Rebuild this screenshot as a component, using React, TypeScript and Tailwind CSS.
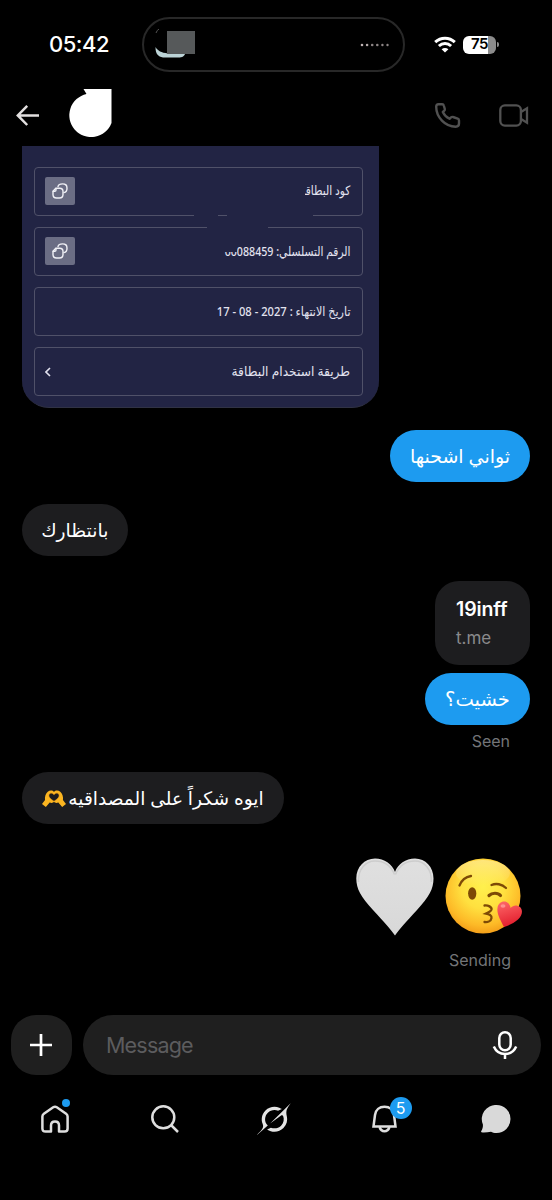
import type { ReactNode } from "react";

function StatusBar() {
  return (
    <div className="flex h-[89px] items-start pt-[17px]">
      <div className="flex h-[55px] w-[142px] items-center pl-[49px] font-['Inter'] text-[22px] font-medium tracking-[-0.5px] text-white">
        05:42
      </div>
      <div className="flex h-[55px] w-[263px] items-center justify-between rounded-full border-2 border-[#282828] pl-[11px] pr-[13px]">
        <svg width="44" height="32" viewBox="0 0 44 32">
          <path d="M.5 18C3 22 6 23.5 13 24.5L30 25C29 28 26 28.5 22 28.5H8C3 27.5 .5 25 .5 18Z" fill="#bcd3d6" />
          <path d="M1 4Q2 1 4 0" stroke="#555" strokeWidth="1" fill="none" />
          <rect x="12" y="2" width="28" height="23" fill="#56595a" />
        </svg>
        <svg width="30" height="4" viewBox="0 0 30 4" fill="#8d8585">
          <circle cx="2" cy="2" r="1.3" fill="#c0b4b4" />
          <circle cx="7.1" cy="2" r="1.3" fill="#b5aaaa" />
          <circle cx="12.2" cy="2" r="1.3" />
          <circle cx="17.3" cy="2" r="1.3" />
          <circle cx="22.4" cy="2" r="1.2" />
          <circle cx="27.5" cy="2" r="1.2" />
        </svg>
      </div>
      <div className="flex h-[55px] items-center pl-[29px]">
        <svg width="22" height="17" viewBox="0 0 22 17" fill="none" stroke="#fff" strokeWidth="3">
          <path d="M1.2 6.2C6.8.9 15.2.9 20.8 6.2" />
          <path d="M4.9 10C8.4 6.8 13.6 6.8 17.1 10" />
          <path d="M11 16.6L7.6 13.2C9.5 11.5 12.5 11.5 14.4 13.2Z" fill="#fff" stroke="none" />
        </svg>
        <div className="ml-[7px] flex h-[18px] w-[33px] items-center justify-center rounded-[6px] bg-linear-to-r from-white from-75% to-[#8c8c8c] to-75% font-['Inter'] text-[15px] font-semibold tracking-[-0.5px] text-black">
          75
        </div>
        <div className="ml-[1px] h-[5px] w-[2px] rounded-r-full bg-[#8c8c8c]" />
      </div>
    </div>
  );
}

function ChatHeader() {
  return (
    <header className="flex h-[56.5px] items-start">
      <svg className="ml-[16px] mt-[15px]" width="24" height="22" viewBox="0 0 24 22" fill="none" stroke="#e2dfdf" strokeWidth="2.5">
        <path d="M23 11.4H2M11.2 1.8L1.8 11.4L11.2 21" />
      </svg>
      <svg className="ml-[28px]" width="45" height="50" viewBox="0 0 45 50" fill="#fff">
        <path d="M15.5 0H43.5V34A21.8 21.8 0 1 1 18.5 5Z" />
      </svg>
      <svg className="ml-[321px] mt-[13px]" width="27" height="26" viewBox="0 0 27 26" fill="none" stroke="#515151" strokeWidth="2.4" strokeLinejoin="round">
        <path d="M4.5 2.2H8.1C9 2.2 9.6 2.7 9.8 3.5L10.8 7C11 7.8 10.7 8.5 10 9L8.8 10C10.2 13 12.6 15.3 15.5 16.8L17 15.4C17.6 14.9 18.3 14.7 19 15L23.7 16.7C24.5 17 25 17.6 25 18.4V21.6C25 24 23.5 24.7 21.7 24.7C11 24.5 2.2 15.2 2.2 4.8C2.2 3.1 3.1 2.2 4.5 2.2Z" />
      </svg>
      <svg className="ml-[38px] mt-[15px]" width="30" height="23" viewBox="0 0 30 23" fill="none" stroke="#515151" strokeWidth="2.3">
        <rect x="1.3" y="1.4" width="20.6" height="20.2" rx="4.5" />
        <path d="M22 8L28 4.3V18.7L22 15" />
      </svg>
    </header>
  );
}

function CopyButton() {
  return (
    <button className="flex h-[28px] w-[30px] items-center justify-center rounded-[2px] bg-[#6b6d84]" aria-label="Copy">
      <svg width="16" height="16" viewBox="0 0 16 16" fill="none" stroke="#f0f0f6" strokeWidth="1.4" strokeLinecap="round">
        <path d="M6 3.5C6.5 1.5 8 .9 10.5.9C13.8.9 15 2 15 5.2C15 8 14.2 9.3 12 9.6" />
        <path d="M3.8 5.3H7.8C10 5.3 11 6.3 11 8.5V11.5C11 14 10 15 7.5 15H4.5C2 15 1 14 1 11.5V8.2Z" />
        <path d="M1.2 8.3H2.7Q4 8.3 4 7V5.4" />
      </svg>
    </button>
  );
}

function CardRow({ children, left }: { children: ReactNode; left?: ReactNode }) {
  return (
    <div className="relative flex h-[49px] items-center justify-between rounded-[4px] border border-[#505169] pl-[10px] pr-[11px] text-[13px] text-[#e2e2ef]">
      <div>{left}</div>
      {children}
    </div>
  );
}

function GiftCard() {
  return (
    <div className="ml-[22px] flex h-[262.5px] w-[356.5px] flex-col gap-[11.3px] rounded-b-[27px] border-b border-[#303244] bg-[#222444] pl-[11.5px] pr-[16px] pt-[21px] font-['Noto_Sans','DejaVu_Sans',sans-serif]">
      <CardRow left={<CopyButton />}>
        <span dir="rtl" className="origin-right scale-x-[0.82] whitespace-nowrap font-medium">كود البطاقة</span>
        <div className="absolute right-[57px] top-[14px] h-[20px] w-[6px] bg-[#222444]" />
        <div className="absolute -bottom-[1px] left-[159px] h-[2px] w-[24px] bg-[#222444]" />
        <div className="absolute -bottom-[1px] left-[192px] h-[2px] w-[86px] bg-[#222444]" />
      </CardRow>
      <CardRow left={<CopyButton />}>
        <span dir="rtl" className="origin-right scale-x-[0.82] whitespace-nowrap font-medium">
          الرقم التسلسلي: <bdi dir="ltr">00088459</bdi>
        </span>
        <div className="absolute right-[125px] top-[14px] h-[10px] w-[14px] bg-[#222444]" />
        <div className="absolute -top-[1px] left-[172px] h-[2px] w-[61px] bg-[#222444]" />
      </CardRow>
      <CardRow>
        <span dir="rtl" className="origin-right scale-x-[0.86] whitespace-nowrap font-medium">
          تاريخ الانتهاء : <bdi dir="ltr">17 - 08 - 2027</bdi>
        </span>
      </CardRow>
      <CardRow
        left={
          <svg width="6" height="10" viewBox="0 0 6 10" fill="none" stroke="#e2e2ef" strokeWidth="1.6">
            <path d="M5 1L1 5L5 9" />
          </svg>
        }
      >
        <span dir="rtl" className="origin-right scale-x-[0.94] whitespace-nowrap">طريقة استخدام البطاقة</span>
      </CardRow>
    </div>
  );
}

function HandsHeart() {
  return (
    <svg width="24" height="17" viewBox="0 0 25 17" preserveAspectRatio="none">
      <path d="M0 14L3.2 10C2.5 7 4 3.5 6 1.8C8 .2 11 .2 12.5 2C14 .2 17 .2 19 1.8C21 3.5 22.5 7 21.8 10L25 14L21 17L17 12.5C14.5 13.5 13.5 12.5 12.5 12C11.5 12.5 10.5 13.5 8 12.5L4 17Z" fill="#fbb521" />
      <path d="M12.5 11.2C9 9 6.8 7.2 7.3 5C7.9 2.7 11 2.7 12.5 4.8C14 2.7 17.1 2.7 17.7 5C18.2 7.2 16 9 12.5 11.2Z" fill="#1d1d1f" stroke="#d98a12" strokeWidth=".5" />
    </svg>
  );
}

function WhiteHeart() {
  return (
    <svg width="78" height="78" viewBox="0 0 78 78">
      <defs>
        <linearGradient id="wh" x1="0" y1="0" x2="0" y2="1">
          <stop offset="0" stopColor="#e0e0e0" />
          <stop offset="1" stopColor="#d8d8d8" />
        </linearGradient>
      </defs>
      <path d="M39 77.5C35 71.5 28 64 17 52C5 39 .3 31 .3 20.5C.3 9 8.5.6 19 .6C28.5.6 36 6 39 14C42 6 49.5.6 59 .6C69.5.6 77.5 9 77.5 20.5C77.5 31 73 39 61 52C50 64 43 71.5 39 77.5Z" fill="url(#wh)" />
      <path d="M2.5 24C1.8 11 10 3 19 3C28 3 35 8 38.5 16.5M39.5 16.5C43 8 50 3 59 3C68 3 76 11 75.3 24" fill="none" stroke="#cdcdcd" strokeWidth="1.5" />
    </svg>
  );
}

function KissFace() {
  return (
    <svg width="78" height="78" viewBox="0 0 78 78">
      <defs>
        <radialGradient id="face" cx=".5" cy=".38" r=".64">
          <stop offset="0" stopColor="#fff04d" />
          <stop offset=".45" stopColor="#ffe03f" />
          <stop offset=".8" stopColor="#fdba27" />
          <stop offset="1" stopColor="#f29a17" />
        </radialGradient>
        <linearGradient id="shine" x1="0" y1="0" x2="0" y2="1">
          <stop offset="0" stopColor="#fff2a8" stopOpacity=".6" />
          <stop offset="1" stopColor="#fff2a8" stopOpacity="0" />
        </linearGradient>
        <linearGradient id="kiss" x1="0" y1="0" x2=".3" y2="1">
          <stop offset="0" stopColor="#ff6a6a" />
          <stop offset="1" stopColor="#e3202f" />
        </linearGradient>
      </defs>
      <circle cx="38" cy="38" r="37.5" fill="url(#face)" />
      <ellipse cx="38" cy="15" rx="27" ry="13" fill="url(#shine)" />
      <g fill="none" stroke="#7d4a06" strokeLinecap="round" strokeWidth="2.3">
        <path d="M14.5 27.5C16.5 22.5 20 19 26 18" />
        <path d="M46.5 27C51 25 57 26 61 30" />
        <path d="M44 37.5C47 34.5 53 34.5 55.5 37.5" strokeWidth="3.2" />
        <path d="M39.5 47.5C43 47 47 49 46.5 51.5C46 53.5 43 54.5 41 55.5C44 56 47 57.5 46.5 60C46 63 43 64.5 39.5 64" />
      </g>
      <ellipse cx="27.2" cy="35.5" rx="4.1" ry="6.2" fill="#7d4a06" />
      <path d="M59 69C56 63 51.5 56 52.5 50C53 45 57.5 42.5 61.5 44C64 45 65.5 48 65.5 50C68 47 72 46.5 75 49C78.5 52.5 77 58 73 61.5C69 65 64 67.5 59 69Z" fill="url(#kiss)" />
      <ellipse cx="58" cy="48" rx="2.5" ry="1.8" fill="#ff9d9d" opacity=".8" />
    </svg>
  );
}

function Conversation() {
  return (
    <main className="flex h-[869.5px] flex-col items-stretch font-['Noto_Sans','DejaVu_Sans',sans-serif] text-[19px] text-white">
      <GiftCard />
      <div dir="rtl" className="mr-[22px] mt-[22px] flex h-[52px] w-[140px] items-center justify-center self-end whitespace-nowrap rounded-[26px] bg-[#1d9bf0]">
        ثواني اشحنها
      </div>
      <div dir="rtl" className="ml-[22px] mt-[22px] flex h-[52px] w-[105.5px] items-center justify-center self-start whitespace-nowrap rounded-[26px] bg-[#1d1d1f] text-[18.7px]">
        بانتظارك
      </div>
      <div className="mr-[22px] mt-[25px] flex h-[84px] w-[95px] flex-col self-end rounded-[24px] bg-[#1d1d1f] pl-[21px] pt-[15px] font-['Inter']">
        <span className="text-[19.5px] font-semibold leading-[26px] tracking-[-0.1px]">19inff</span>
        <span className="mt-[4px] text-[17px] leading-[24px] text-[#8a8a8c]">t.me</span>
      </div>
      <div dir="rtl" className="mr-[22px] mt-[8px] flex h-[52px] w-[105px] items-center justify-center self-end whitespace-nowrap rounded-[26px] bg-[#1d9bf0] text-[19.5px]">
        خشيت؟
      </div>
      <span className="mr-[42px] mt-[4px] self-end font-['Inter'] text-[16px] leading-[24px] text-[#737578]">Seen</span>
      <div dir="rtl" className="ml-[22px] mt-[19px] flex h-[52px] w-[262px] items-center justify-center gap-[2px] self-start whitespace-nowrap rounded-[26px] bg-[#1d1d1f] text-[18.6px]">
        <span>ايوه شكراً على المصداقيه</span>
        <HandsHeart />
      </div>
      <div className="mr-[29px] mt-[34px] flex gap-[11px] self-end">
        <WhiteHeart />
        <KissFace />
      </div>
      <span className="mr-[41px] mt-[12px] self-end font-['Inter'] text-[16px] leading-[24px] text-[#737578]">Sending</span>
    </main>
  );
}

function Composer() {
  return (
    <div className="flex h-[60px] gap-[11px] pl-[11px] pr-[11px]">
      <button className="flex w-[60.5px] items-center justify-center rounded-[25px] bg-[#1f1f1f]" aria-label="Add">
        <svg width="24" height="24" viewBox="0 0 24 24" stroke="#fff" strokeWidth="2.7">
          <path d="M12 1V23M1 12H23" />
        </svg>
      </button>
      <div className="flex flex-1 items-center justify-between rounded-[30px] bg-[#1f1f1f] pl-[23.5px] pr-[23px]">
        <span className="font-['Inter'] text-[21.5px] tracking-[-0.8px] text-[#5c5c5e]">Message</span>
        <svg width="26" height="28" viewBox="0 0 26 28" fill="none" stroke="#fff" strokeWidth="2.5">
          <rect x="7.3" y="1.3" width="11.4" height="18" rx="5.7" />
          <path d="M1.8 15.5C4 20.5 8 23 13 23C18 23 22 20.5 24.2 15.5M13 23V28" />
        </svg>
      </div>
    </div>
  );
}

function TabBar() {
  return (
    <nav className="flex h-[125px] items-start pt-[28px]">
      <div className="relative ml-[41px] mt-[2px] h-[28px] w-[28px]">
        <svg width="28" height="28" viewBox="0 0 28 28" fill="none" stroke="#dedede" strokeWidth="2.5" strokeLinejoin="round">
          <path d="M1.4 11.5C1.4 10.3 1.9 9.5 2.9 8.8L12.2 2.3C13.4 1.5 14.6 1.5 15.8 2.3L25.1 8.8C26.1 9.5 26.6 10.3 26.6 11.5V23.5C26.6 25.5 25.5 26.6 23.5 26.6H18V20.5C18 18 16.5 16.6 14 16.6C11.5 16.6 10 18 10 20.5V26.6H4.5C2.5 26.6 1.4 25.5 1.4 23.5Z" />
        </svg>
        <span className="absolute -top-[6px] right-[-1px] h-[8px] w-[8px] rounded-full bg-[#1d9bf0]" />
      </div>
      <svg className="ml-[82px] mt-[2px]" width="28" height="28" viewBox="0 0 28 28" fill="none" stroke="#dedede" strokeWidth="2.5">
        <circle cx="12.3" cy="12.3" r="11" />
        <path d="M20 20L27 27" />
      </svg>
      <svg className="ml-[78px]" width="34" height="32" viewBox="0 0 33 32" fill="#e4e4e4" preserveAspectRatio="none">
        <path d="M12.745 20.54l10.97-8.19c.539-.4 1.307-.244 1.564.38 1.349 3.288.746 7.241-1.938 9.955-2.683 2.714-6.417 3.31-9.83 1.954l-3.728 1.745c5.347 3.697 11.84 2.782 15.898-1.324 3.219-3.255 4.216-7.692 3.284-11.693l.008.009c-1.351-5.878.332-8.227 3.782-13.031L33 0l-4.54 4.59v-.014L12.743 20.544m-2.263 1.987c-3.837-3.707-3.175-9.446.1-12.755 2.42-2.449 6.388-3.448 9.852-1.979l3.72-1.737c-.67-.49-1.53-1.017-2.515-1.387-4.455-1.854-9.789-.931-13.41 2.728-3.483 3.523-4.579 8.94-2.697 13.561 1.405 3.454-.899 5.898-3.22 8.364C1.49 30.2.666 31.074 0 32l10.478-9.466" />
      </svg>
      <div className="relative ml-[81px] mt-[2px] h-[28px] w-[25px]">
        <svg width="25" height="28" viewBox="0 0 25 28" fill="none" stroke="#dedede" strokeWidth="2.5">
          <path d="M1.5 21.4L3 10C3.6 4.8 7.5 1.7 12.5 1.7C17.5 1.7 21.4 4.8 22 10L23.5 21.4Z" />
          <path d="M7.5 22C8.5 25 10 26.3 12.5 26.3C15 26.3 16.5 25 17.5 22" />
        </svg>
        <span className="absolute -top-[8px] left-[17.5px] flex h-[22px] w-[22px] items-center justify-center rounded-full bg-[#1d9bf0] font-['Inter'] text-[16px] text-white">
          5
        </span>
      </div>
      <svg className="ml-[83.5px] mt-[2px]" width="30" height="28" viewBox="0 0 30 28" fill="#d9d9d9">
        <path d="M15.5 0A14 14 0 0 1 15.5 28C13 28 11.5 27.6 10 26.8C7 27 4 27.8 .5 27.3C0 27 0 26.5 .3 26C1.8 23.8 2 21.5 1.9 19.5A14 14 0 0 1 15.5 0Z" />
      </svg>
    </nav>
  );
}

export default function App() {
  return (
    <div className="h-[1200px] w-[552px] overflow-hidden bg-black">
      <StatusBar />
      <ChatHeader />
      <Conversation />
      <Composer />
      <TabBar />
    </div>
  );
}
